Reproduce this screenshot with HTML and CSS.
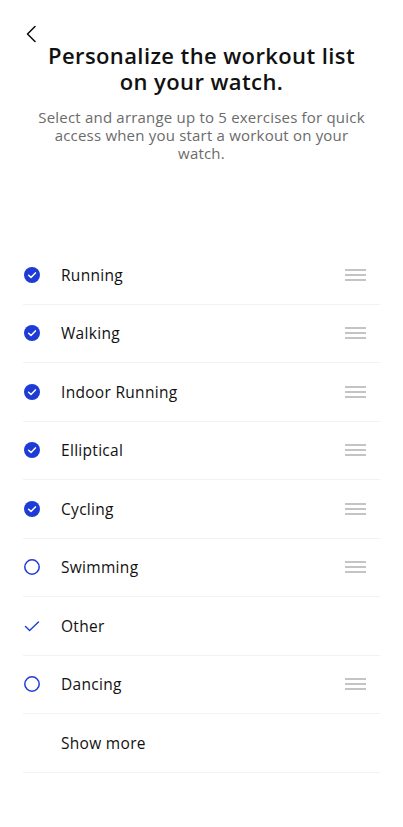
FILE: index.html
```html
<!DOCTYPE html>
<html>
<head>
<meta charset="utf-8">
<link rel="stylesheet" href="styles.css">
</head>
<body>
<div class="page">
  <div class="topbar">
    <svg class="back" width="12" height="18" viewBox="0 0 12 18"><path d="M10 1.5 L2.5 9 L10 16.5" fill="none" stroke="#111" stroke-width="1.6" stroke-linecap="round" stroke-linejoin="round"/></svg>
  </div>
  <h1 class="title">Personalize the workout list<br>on your watch.</h1>
  <p class="subtitle">Select and arrange up to 5 exercises for quick access when you start a workout on your watch.</p>
  <ul class="list">
    <li class="row"><span class="ic"><svg width="16" height="16" viewBox="0 0 16 16"><circle cx="8" cy="8" r="8" fill="#1f3bd6"/><path d="M4.6 8.2 L7 10.4 L11.4 5.9" fill="none" stroke="#fff" stroke-width="1.5" stroke-linecap="round" stroke-linejoin="round"/></svg></span><span class="label">Running</span><span class="handle"></span></li>
    <li class="row"><span class="ic"><svg width="16" height="16" viewBox="0 0 16 16"><circle cx="8" cy="8" r="8" fill="#1f3bd6"/><path d="M4.6 8.2 L7 10.4 L11.4 5.9" fill="none" stroke="#fff" stroke-width="1.5" stroke-linecap="round" stroke-linejoin="round"/></svg></span><span class="label">Walking</span><span class="handle"></span></li>
    <li class="row"><span class="ic"><svg width="16" height="16" viewBox="0 0 16 16"><circle cx="8" cy="8" r="8" fill="#1f3bd6"/><path d="M4.6 8.2 L7 10.4 L11.4 5.9" fill="none" stroke="#fff" stroke-width="1.5" stroke-linecap="round" stroke-linejoin="round"/></svg></span><span class="label">Indoor Running</span><span class="handle"></span></li>
    <li class="row"><span class="ic"><svg width="16" height="16" viewBox="0 0 16 16"><circle cx="8" cy="8" r="8" fill="#1f3bd6"/><path d="M4.6 8.2 L7 10.4 L11.4 5.9" fill="none" stroke="#fff" stroke-width="1.5" stroke-linecap="round" stroke-linejoin="round"/></svg></span><span class="label">Elliptical</span><span class="handle"></span></li>
    <li class="row"><span class="ic"><svg width="16" height="16" viewBox="0 0 16 16"><circle cx="8" cy="8" r="8" fill="#1f3bd6"/><path d="M4.6 8.2 L7 10.4 L11.4 5.9" fill="none" stroke="#fff" stroke-width="1.5" stroke-linecap="round" stroke-linejoin="round"/></svg></span><span class="label">Cycling</span><span class="handle"></span></li>
    <li class="row"><span class="ic"><svg width="16" height="16" viewBox="0 0 16 16"><circle cx="8" cy="8" r="7.2" fill="none" stroke="#1f3bd6" stroke-width="1.5"/></svg></span><span class="label">Swimming</span><span class="handle"></span></li>
    <li class="row"><span class="ic"><svg width="16" height="16" viewBox="0 0 16 16"><path d="M1.5 8.6 L5.6 12.4 L14.5 4" fill="none" stroke="#1f3bd6" stroke-width="1.4" stroke-linecap="round" stroke-linejoin="round"/></svg></span><span class="label">Other</span></li>
    <li class="row"><span class="ic"><svg width="16" height="16" viewBox="0 0 16 16"><circle cx="8" cy="8" r="7.2" fill="none" stroke="#1f3bd6" stroke-width="1.5"/></svg></span><span class="label">Dancing</span><span class="handle"></span></li>
    <li class="row"><span class="ic"></span><span class="label">Show more</span></li>
  </ul>
</div>
</body>
</html>
```
FILE: styles.css
```css
* { box-sizing: border-box; }
html, body { margin: 0; padding: 0; background: #fff; }
body { font-family: "Open Sans", "Noto Sans", sans-serif; color: #111; }
.page { width: 403px; padding: 0 23px; }
.topbar { height: 42px; padding-top: 25px; padding-left: 2px; }
.back { display: block; }
.title {
  margin: 0;
  text-align: center;
  font-size: 22px;
  font-weight: 600;
  line-height: 26px;
  letter-spacing: 0.4px;
  color: #111;
}
.subtitle {
  margin: 14px 10px 0;
  text-align: center;
  font-size: 15px;
  line-height: 18px;
  color: #6b6b6b;
  letter-spacing: 0.2px;
}
.list { list-style: none; margin: 84px 0 0; padding: 0; }
.row {
  display: flex;
  align-items: center;
  height: 58.5px;
  border-bottom: 1px solid #eef3f7;
}
.ic { width: 38px; flex: none; display: flex; align-items: center; padding-left: 1px; }
.ic svg { display: block; }
.label { flex: 1; font-size: 15.5px; letter-spacing: 0.3px; color: #111; }
.handle {
  width: 21px;
  height: 12px;
  margin-right: 14px;
  background: linear-gradient(#c4c4c4, #c4c4c4) 0 0 / 100% 2px no-repeat,
              linear-gradient(#c4c4c4, #c4c4c4) 0 5px / 100% 2px no-repeat,
              linear-gradient(#c4c4c4, #c4c4c4) 0 10px / 100% 2px no-repeat;
}
```
